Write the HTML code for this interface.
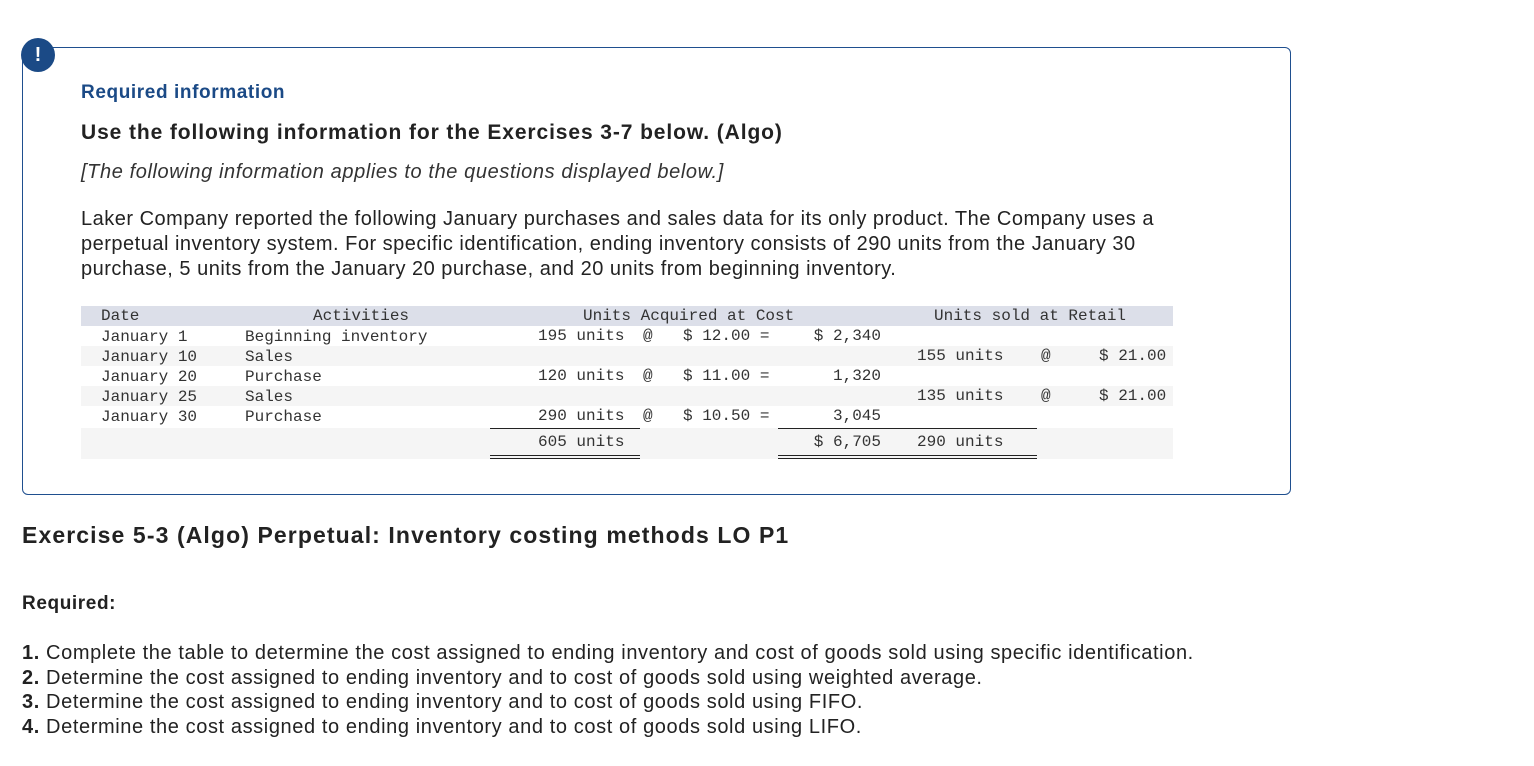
<!DOCTYPE html>
<html><head><meta charset="utf-8"><style>
body{margin:0;width:1534px;height:766px;background:#fff;font-family:"Liberation Sans",sans-serif;color:#222;position:relative;overflow:hidden}
.a{position:absolute;white-space:nowrap}
.m{font-family:"Liberation Mono",monospace;font-size:16px;color:#333}
.r{text-align:right}
.box{position:absolute;left:22px;top:47px;width:1267px;height:446px;border:1px solid #1f4f8f;border-radius:6px}
.circ{position:absolute;left:21px;top:38px;width:34px;height:34px;border-radius:50%;background:#1b4a86;color:#fff;font-weight:bold;font-size:20px;text-align:center;line-height:34px}
.bar{position:absolute;left:81px;width:1092px}
.ln{position:absolute;height:1px;background:#222}
</style></head><body>
<div class="box"></div>
<div class="circ">!</div>
<div class="a" style="left:81px;top:82px;font-size:19px;font-weight:bold;color:#1b4a86;letter-spacing:0.6px">Required information</div>
<div class="a" style="left:81px;top:121px;font-size:21px;font-weight:bold;color:#222;letter-spacing:0.9px">Use the following information for the Exercises 3-7 below. (Algo)</div>
<div class="a" style="left:81px;top:161px;font-size:20px;font-style:italic;color:#333;letter-spacing:0.6px">[The following information applies to the questions displayed below.]</div>
<div class="a" style="left:81px;top:207px;font-size:20px;line-height:25px;color:#222;letter-spacing:0.5px">Laker Company reported the following January purchases and sales data for its only product. The Company uses a<br>perpetual inventory system. For specific identification, ending inventory consists of 290 units from the January 30<br>purchase, 5 units from the January 20 purchase, and 20 units from beginning inventory.</div>

<div class="bar" style="top:306px;height:20px;background:#dcdfe9"></div>
<div class="bar" style="top:346px;height:20px;background:#f5f5f5"></div>
<div class="bar" style="top:386px;height:20px;background:#f5f5f5"></div>
<div class="bar" style="top:428px;height:31px;background:#f5f5f5"></div>

<div class="a m" style="left:101px;top:307px">Date</div>
<div class="a m" style="left:313px;top:307px">Activities</div>
<div class="a m" style="left:583px;top:307px">Units Acquired at Cost</div>
<div class="a m" style="left:934px;top:307px">Units sold at Retail</div>

<div class="a m" style="left:101px;top:327px;line-height:20px">January 1<br>January 10<br>January 20<br>January 25<br>January 30</div>
<div class="a m" style="left:245px;top:327px;line-height:20px">Beginning inventory<br>Sales<br>Purchase<br>Sales<br>Purchase</div>

<div class="a m" style="left:538px;top:327px">195 units</div>
<div class="a m" style="left:538px;top:367px">120 units</div>
<div class="a m" style="left:538px;top:407px">290 units</div>
<div class="a m" style="left:538px;top:433px">605 units</div>
<div class="a m" style="left:643px;top:327px">@</div>
<div class="a m" style="left:643px;top:367px">@</div>
<div class="a m" style="left:643px;top:407px">@</div>
<div class="a m" style="left:683px;top:327px">$ 12.00 =</div>
<div class="a m" style="left:683px;top:367px">$ 11.00 =</div>
<div class="a m" style="left:683px;top:407px">$ 10.50 =</div>
<div class="a m r" style="left:780px;width:101px;top:327px">$ 2,340</div>
<div class="a m r" style="left:780px;width:101px;top:367px">1,320</div>
<div class="a m r" style="left:780px;width:101px;top:407px">3,045</div>
<div class="a m r" style="left:780px;width:101px;top:433px">$ 6,705</div>
<div class="a m" style="left:917px;top:347px">155 units</div>
<div class="a m" style="left:917px;top:387px">135 units</div>
<div class="a m" style="left:917px;top:433px">290 units</div>
<div class="a m" style="left:1041px;top:347px">@</div>
<div class="a m" style="left:1041px;top:387px">@</div>
<div class="a m" style="left:1099px;top:347px">$ 21.00</div>
<div class="a m" style="left:1099px;top:387px">$ 21.00</div>

<div class="ln" style="left:490px;width:150px;top:428px"></div>
<div class="ln" style="left:778px;width:259px;top:428px"></div>
<div class="ln" style="left:490px;width:150px;top:455px"></div>
<div class="ln" style="left:490px;width:150px;top:458px"></div>
<div class="ln" style="left:778px;width:259px;top:455px"></div>
<div class="ln" style="left:778px;width:259px;top:458px"></div>

<div class="a" style="left:22px;top:522px;font-size:23px;font-weight:bold;color:#222;letter-spacing:1.1px">Exercise 5-3 (Algo) Perpetual: Inventory costing methods LO P1</div>
<div class="a" style="left:22px;top:593px;font-size:19px;font-weight:bold;color:#222;letter-spacing:0.6px">Required:</div>
<div class="a" style="left:22px;top:641px;font-size:20px;line-height:24.5px;color:#222;letter-spacing:0.6px"><b>1.</b> Complete the table to determine the cost assigned to ending inventory and cost of goods sold using specific identification.<br><b>2.</b> Determine the cost assigned to ending inventory and to cost of goods sold using weighted average.<br><b>3.</b> Determine the cost assigned to ending inventory and to cost of goods sold using FIFO.<br><b>4.</b> Determine the cost assigned to ending inventory and to cost of goods sold using LIFO.</div>
</body></html>
